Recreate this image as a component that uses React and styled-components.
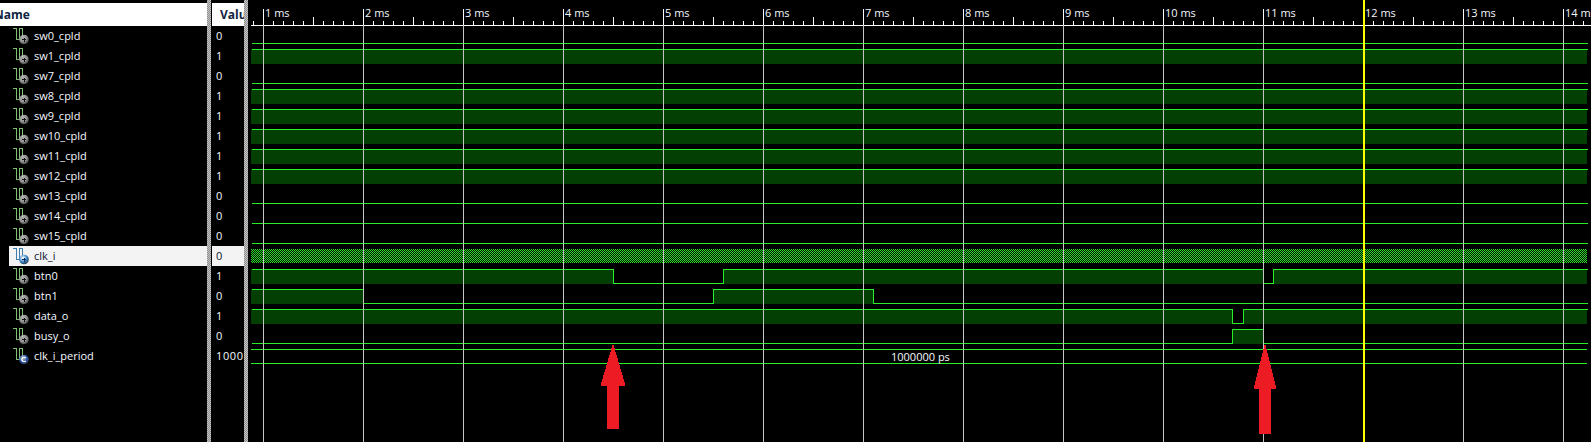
import React from "react";
import styled, { createGlobalStyle } from "styled-components";

const Global = createGlobalStyle`
  html, body { margin: 0; padding: 0; background: #000; }
  #root { width: 1591px; height: 442px; overflow: hidden; }
`;

const SIGNALS = [
  { name: "sw0_cpld", value: "0" },
  { name: "sw1_cpld", value: "1" },
  { name: "sw7_cpld", value: "0" },
  { name: "sw8_cpld", value: "1" },
  { name: "sw9_cpld", value: "1" },
  { name: "sw10_cpld", value: "1" },
  { name: "sw11_cpld", value: "1" },
  { name: "sw12_cpld", value: "1" },
  { name: "sw13_cpld", value: "0" },
  { name: "sw14_cpld", value: "0" },
  { name: "sw15_cpld", value: "0" },
  { name: "clk_i", value: "0", selected: true },
  { name: "btn0", value: "1" },
  { name: "btn1", value: "0" },
  { name: "data_o", value: "1" },
  { name: "busy_o", value: "0" },
  { name: "clk_i_period", value: "1000", constant: true },
];

const X0 = 251;
const X1 = 1587;
const LINE = "#2aee2a";
const FILL = "#033f03";

/* Each wave is a list of [startX, level] segments; the level holds until the next one. */
const WAVES = {
  0: [[X0, 0]],
  1: [[X0, 1]],
  2: [[X0, 0]],
  3: [[X0, 1]],
  4: [[X0, 1]],
  5: [[X0, 1]],
  6: [[X0, 1]],
  7: [[X0, 1]],
  8: [[X0, 0]],
  9: [[X0, 0]],
  10: [[X0, 0]],
  12: [[X0, 1], [613, 0], [723, 1], [1263, 0], [1273, 1]],
  13: [[X0, 1], [363, 0], [713, 1], [873, 0]],
  14: [[X0, 1], [1232, 0], [1243, 1]],
  15: [[X0, 0], [1232, 1], [1263, 0]],
};

const Page = styled.div`
  display: flex;
  width: 1591px;
  height: 442px;
  background: #000;
  overflow: hidden;
  font-family: "Open Sans", "Noto Sans", sans-serif;
  font-size: 11px;
  color: #f4f8ff;
`;

const Column = styled.div`
  flex: none;
  width: ${(p) => p.$width}px;
  padding-top: 3px;
  overflow: hidden;
  white-space: nowrap;
`;

const Splitter = styled.div`
  flex: none;
  width: 4px;
  margin: ${(p) => p.$margin};
  background: repeating-conic-gradient(#c4c4c4 0 25%, #8f8f8f 0 50%) 0 0 / 2px 2px;
`;

const Header = styled.div`
  height: 23px;
  background: #fff;
  color: #10233f;
  font-weight: 700;
  font-size: 12px;
  line-height: 24px;
  padding-left: ${(p) => p.$indent}px;
  margin-left: ${(p) => p.$shift || 0}px;
`;

const NameRow = styled.div`
  display: flex;
  align-items: center;
  height: 20px;
  margin-left: 9px;
  padding-left: 3px;
  background: ${(p) => (p.$selected ? "#f3f3f3" : "transparent")};
  color: ${(p) => (p.$selected ? "#10152e" : "inherit")};
`;

const NameLabel = styled.span`
  margin-left: 3px;
  margin-bottom: 1px;
`;

const ValueRow = styled.div`
  height: 20px;
  line-height: 19px;
  padding-left: 4px;
  letter-spacing: 0.6px;
  background: ${(p) => (p.$selected ? "#f3f3f3" : "transparent")};
  color: ${(p) => (p.$selected ? "#10152e" : "inherit")};
`;

const Canvas = styled.svg`
  flex: none;
  display: block;
  width: 1343px;
  height: 442px;
  shape-rendering: crispEdges;
`;

const RulerLabel = styled.text`
  font-family: "Open Sans", "Noto Sans", sans-serif;
  font-size: 11px;
  fill: #f4f8ff;
  shape-rendering: auto;
`;

function SignalIcon({ kind, selected }) {
  const stroke = selected ? "#3f7fb0" : "#7fbf6f";
  const badge = kind === "constant" ? "#1f4fb0" : selected ? "#2f80c8" : "#8a8a8a";
  const id = `badge-${kind}`;
  return (
    <svg width="19" height="18" viewBox="0 0 19 18" style={{ flex: "none" }}>
      <defs>
        <radialGradient id={id} cx="40%" cy="35%" r="70%">
          <stop offset="0%" stopColor="#ffffff" stopOpacity="0.65" />
          <stop offset="60%" stopColor={badge} />
          <stop offset="100%" stopColor="#333" />
        </radialGradient>
      </defs>
      <path
        d="M0.5 1.5H4.5V12.5H7.5V1.5H10.5V10"
        fill="none"
        stroke={stroke}
        strokeWidth={selected ? 1.6 : 1.2}
        shapeRendering="crispEdges"
      />
      <circle cx="12" cy="12.5" r="4.8" fill={`url(#${id})`} />
      {kind === "constant" ? (
        <path d="M13.8 11.1A2.2 2.2 0 1 0 13.8 13.9" fill="none" stroke="#fff" strokeWidth="1.3" />
      ) : (
        <path
          d="M10 12.5H14M12 10.5V14.5"
          stroke={selected ? "#0c2c60" : "#111"}
          strokeWidth="1"
          shapeRendering="crispEdges"
        />
      )}
    </svg>
  );
}

function Wave({ row, segments }) {
  const top = 26 + row * 20;
  const hi = top + 3.5;
  const lo = top + 17.5;
  const levelY = (l) => (l ? hi : lo);
  const spans = segments.map(([x, level], i) => ({
    x,
    level,
    end: i + 1 < segments.length ? segments[i + 1][0] : X1,
  }));
  const d = spans
    .map((s, i) => `${i === 0 ? "M" : "L"}${s.x + 0.5} ${levelY(s.level)}H${s.end + 0.5}`)
    .join("");
  return (
    <g>
      {spans
        .filter((s) => s.level)
        .map((s) => (
          <rect key={s.x} x={s.x} y={top + 3} width={s.end - s.x} height={15} fill={FILL} />
        ))}
      <path d={d} fill="none" stroke={LINE} strokeWidth="1" />
    </g>
  );
}

function Ruler() {
  const ticks = [];
  for (let x = 253; x < 1591; x += 10) {
    const mid = (x - 263) % 50 === 0;
    ticks.push(<line key={x} x1={x + 0.5} x2={x + 0.5} y1={mid ? 17 : 21} y2={25} stroke="#fff" />);
  }
  const majors = Array.from({ length: 14 }, (_, i) => i + 1);
  return (
    <g>
      <line x1={X0} x2={1591} y1={25.5} y2={25.5} stroke="#fff" />
      {ticks}
      {majors.map((ms) => {
        const x = 163 + ms * 100;
        return (
          <g key={ms}>
            <line x1={x + 0.5} x2={x + 0.5} y1={9} y2={25} stroke="#fff" />
            <RulerLabel x={x + 2} y={17}>{`${ms} ms`}</RulerLabel>
          </g>
        );
      })}
    </g>
  );
}

function Arrow({ x, headBottom, tail, half }) {
  const shaft = 6;
  return (
    <path
      d={`M${x} 343L${x + half} ${headBottom - 2}V${headBottom}H${x + shaft}V${tail}H${x - shaft}V${headBottom}H${
        x - half
      }V${headBottom - 2}Z`}
      fill="#ed1c24"
    />
  );
}

export default function App() {
  return (
    <Page>
      <Global />
      <Column $width={207}>
        <Header $indent={0} $shift={-6}>Name</Header>
        {SIGNALS.map((s) => (
          <NameRow key={s.name} $selected={s.selected}>
            <SignalIcon
              kind={s.constant ? "constant" : s.selected ? "selected" : "port"}
              selected={s.selected}
            />
            <NameLabel>{s.name}</NameLabel>
          </NameRow>
        ))}
      </Column>
      <Splitter $margin="0 1px 0 0" />
      <Column $width={32}>
        <Header $indent={8}>Value</Header>
        {SIGNALS.map((s) => (
          <ValueRow key={s.name} $selected={s.selected}>{s.value}</ValueRow>
        ))}
      </Column>
      <Splitter $margin="0" />
      <Canvas viewBox="248 0 1343 442">
        <defs>
          <pattern id="clk" width="2" height="2" patternUnits="userSpaceOnUse">
            <rect width="1" height="1" fill="#2be82b" />
            <rect x="1" y="1" width="1" height="1" fill="#2be82b" />
          </pattern>
        </defs>
        <Ruler />
        {Object.entries(WAVES).map(([row, segs]) => (
          <Wave key={row} row={Number(row)} segments={segs} />
        ))}
        <rect x={X0} y={249} width={X1 - X0} height={14} fill="url(#clk)" />
        <line x1={X0} x2={X1} y1={349.5} y2={349.5} stroke={LINE} />
        <line x1={X0} x2={X1} y1={363.5} y2={363.5} stroke={LINE} />
        {Array.from({ length: 14 }, (_, i) => (
          <line key={i} x1={263.5 + i * 100} x2={263.5 + i * 100} y1={25} y2={442} stroke="#c4c4c4" />
        ))}
        <RulerLabel x={891} y={361}>1000000 ps</RulerLabel>
        <Arrow x={613} headBottom={386} tail={429} half={12} />
        <Arrow x={1265} headBottom={389} tail={434} half={11} />
        <rect x={1363} y={0} width={2} height={442} fill="#ffff00" />
      </Canvas>
    </Page>
  );
}
